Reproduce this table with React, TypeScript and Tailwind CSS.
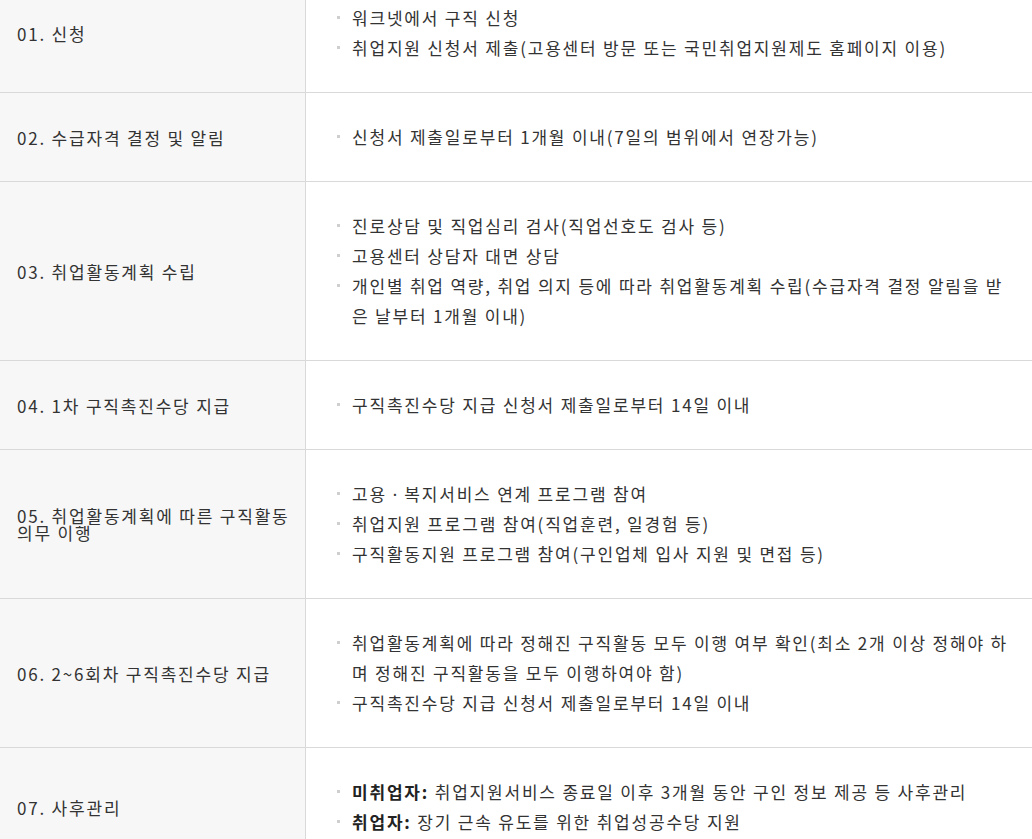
import * as React from "react";

type Item = { strong?: string; text: string };
type Step = { label: string; items: Item[] };

const steps: Step[] = [
  {
    label: "01. 신청",
    items: [
      { text: "워크넷에서 구직 신청" },
      { text: "취업지원 신청서 제출(고용센터 방문 또는 국민취업지원제도 홈페이지 이용)" },
    ],
  },
  {
    label: "02. 수급자격 결정 및 알림",
    items: [{ text: "신청서 제출일로부터 1개월 이내(7일의 범위에서 연장가능)" }],
  },
  {
    label: "03. 취업활동계획 수립",
    items: [
      { text: "진로상담 및 직업심리 검사(직업선호도 검사 등)" },
      { text: "고용센터 상담자 대면 상담" },
      {
        text: "개인별 취업 역량, 취업 의지 등에 따라 취업활동계획 수립(수급자격 결정 알림을 받은 날부터 1개월 이내)",
      },
    ],
  },
  {
    label: "04. 1차 구직촉진수당 지급",
    items: [{ text: "구직촉진수당 지급 신청서 제출일로부터 14일 이내" }],
  },
  {
    label: "05. 취업활동계획에 따른 구직활동 의무 이행",
    items: [
      { text: "고용ㆍ복지서비스 연계 프로그램 참여" },
      { text: "취업지원 프로그램 참여(직업훈련, 일경험 등)" },
      { text: "구직활동지원 프로그램 참여(구인업체 입사 지원 및 면접 등)" },
    ],
  },
  {
    label: "06. 2~6회차 구직촉진수당 지급",
    items: [
      {
        text: "취업활동계획에 따라 정해진 구직활동 모두 이행 여부 확인(최소 2개 이상 정해야 하며 정해진 구직활동을 모두 이행하여야 함)",
      },
      { text: "구직촉진수당 지급 신청서 제출일로부터 14일 이내" },
    ],
  },
  {
    label: "07. 사후관리",
    items: [
      { strong: "미취업자:", text: " 취업지원서비스 종료일 이후 3개월 동안 구인 정보 제공 등 사후관리" },
      { strong: "취업자:", text: " 장기 근속 유도를 위한 취업성공수당 지원" },
    ],
  },
];

export default function App() {
  return (
    <div
      className="h-[839px] overflow-hidden bg-white text-[#333] text-[17px] tracking-[1.8px]"
      style={{ fontFamily: '"Noto Sans CJK KR", "Noto Sans", sans-serif' }}
    >
      <div className="-mt-[26px]">
        {steps.map((s) => (
          <div key={s.label} className="flex border-b border-[#d9d9d9]">
            <div className="w-[306px] shrink-0 flex items-center bg-[#f7f7f7] border-r border-[#d9d9d9] pl-[17px] pr-[10px] leading-[17px] break-keep">
              {s.label}
            </div>
            <ul className="flex-1 py-[29px] pl-[31px] pr-[14px] break-all">
              {s.items.map((it, i) => (
                <li key={i} className="relative pl-[15px] leading-[30px]">
                  <span className="absolute left-0 top-[13px] h-[3px] w-[3px] bg-[#cfcfcf]" />
                  {it.strong && <b className="font-semibold text-[#222]">{it.strong}</b>}
                  {it.text}
                </li>
              ))}
            </ul>
          </div>
        ))}
      </div>
    </div>
  );
}
